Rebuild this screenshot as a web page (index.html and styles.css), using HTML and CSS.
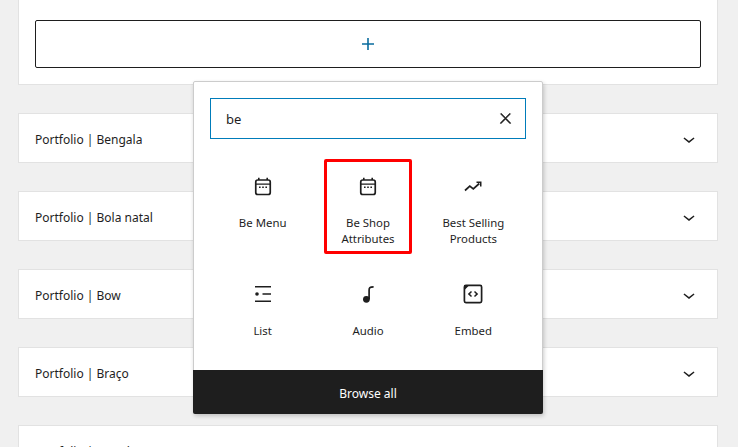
FILE: index.html
```html
<!DOCTYPE html>
<html lang="en">
<head>
  <meta charset="UTF-8" />
  <title>Block inserter</title>
  <link rel="stylesheet" href="styles.css">
</head>
<body>

<div class="editor">
  <div class="appender-card">
    <button class="appender">
      <svg class="icon-plus" viewBox="0 0 24 24" width="24" height="24"><path d="M18 11.2h-5.2V6h-1.600v5.200H6v1.600h5.200V18h1.600v-5.200H18z"/></svg>
    </button>
  </div>

  <div class="row">
    <span>Portfolio | Bengala</span>
    <svg class="chevron" viewBox="0 0 24 24" width="24" height="24"><path d="M17.500 11.600L12 16l-5.500-4.400.9-1.200L12 14l4.600-3.600z"/></svg>
  </div>
  <div class="row">
    <span>Portfolio | Bola natal</span>
    <svg class="chevron" viewBox="0 0 24 24" width="24" height="24"><path d="M17.500 11.600L12 16l-5.500-4.400.9-1.200L12 14l4.600-3.600z"/></svg>
  </div>
  <div class="row">
    <span>Portfolio | Bow</span>
    <svg class="chevron" viewBox="0 0 24 24" width="24" height="24"><path d="M17.500 11.600L12 16l-5.500-4.400.9-1.200L12 14l4.600-3.600z"/></svg>
  </div>
  <div class="row">
    <span>Portfolio | Braço</span>
    <svg class="chevron" viewBox="0 0 24 24" width="24" height="24"><path d="M17.500 11.600L12 16l-5.500-4.400.9-1.200L12 14l4.600-3.600z"/></svg>
  </div>
  <div class="row">
    <span>Portfolio | Bread</span>
    <svg class="chevron" viewBox="0 0 24 24" width="24" height="24"><path d="M17.500 11.600L12 16l-5.500-4.400.9-1.200L12 14l4.600-3.600z"/></svg>
  </div>
</div>

<!-- inserter popover -->
<div class="popover">
  <div class="popover-body">
    <div class="search">
      <span>be</span>
      <svg viewBox="0 0 24 24" width="17" height="17"><path d="M13 11.800l6.100-6.300-1-1-6.100 6.200-6.100-6.200-1 1 6.100 6.300-6.500 6.700 1 1 6.500-6.600 6.500 6.600 1-1z"/></svg>
    </div>

    <div class="blocks">
      <div class="block">
        <svg viewBox="0 0 24 24" width="24" height="24"><rect class="line" x="4.750" y="6" width="14.500" height="14.500" rx="2"/><path d="M4.500 9.400h15v1.400h-15zM7 3.800h1.600V6H7zM15.400 3.800H17V6h-1.600zM8 12.500h1.600v1.600H8zM11.200 12.500h1.600v1.600h-1.600zM14.400 12.500H16v1.600h-1.600z"/></svg>
        <span>Be Menu</span>
      </div>
      <div class="block marked">
        <svg viewBox="0 0 24 24" width="24" height="24"><rect class="line" x="4.750" y="6" width="14.500" height="14.500" rx="2"/><path d="M4.500 9.400h15v1.400h-15zM7 3.800h1.600V6H7zM15.400 3.800H17V6h-1.600zM8 12.500h1.600v1.600H8zM11.200 12.500h1.600v1.600h-1.600zM14.400 12.500H16v1.600h-1.600z"/></svg>
        <span>Be Shop Attributes</span>
      </div>
      <div class="block">
        <svg viewBox="0 0 24 24" width="24" height="24"><path class="line" d="M4 16.500l4.800-4.300 3.500 2.800 6-5.500"/><path d="M15.500 7.500h5v5H19V9h-3.500z"/></svg>
        <span>Best Selling Products</span>
      </div>
      <div class="block">
        <svg viewBox="0 0 24 24" width="24" height="24"><path d="M4 4h16v1.500H4zM4 18.500h16V20H4zM11.500 11.300H20v1.400h-8.500z"/><circle cx="6" cy="12" r="1.800"/></svg>
        <span>List</span>
      </div>
      <div class="block">
        <svg viewBox="0 0 24 24" width="24" height="24"><circle cx="10.400" cy="17.300" r="3.400"/><path class="line" d="M13.100 17V8c0-1 .2-1.700.8-2.300.8-.8 2.200-.8 3.700-.8"/></svg>
        <span>Audio</span>
      </div>
      <div class="block">
        <svg viewBox="0 0 24 24" width="24" height="24"><rect class="line" x="3.400" y="3.400" width="17.200" height="17.200" rx="1.500"/><path d="M3 3h5.500L3 8.500zM10 9l-3.200 3 3.200 3 1-1.100-2-1.900 2-1.900zM14 9l3.200 3-3.200 3-1-1.100 2-1.900-2-1.900z"/></svg>
        <span>Embed</span>
      </div>
    </div>
  </div>
  <div class="browse">Browse all</div>
</div>

</body>
</html>
```

FILE: styles.css
```css
html, body {
  height: 100%;
}

body {
  margin: 0;
  background-color: #f0f0f0;
  color: #1e1e1e;
  font-family: "Noto Sans", sans-serif;
  font-size: 12px;
  overflow: hidden;
}

.editor {
  height: 447px;
  overflow: hidden;
  padding: 0 20px 0 18px;
}

.appender-card {
  background-color: white;
  border: 1px solid #e2e2e2;
  border-top: none;
  padding: 20px 16px 16px;
  margin-bottom: 28px;
}

.appender {
  display: flex;
  justify-content: center;
  align-items: center;
  width: 100%;
  height: 48px;
  padding: 0;
  background-color: white;
  border: 1px solid #1e1e1e;
  border-radius: 2px;
}

.icon-plus {
  fill: #0a6c9e;
}

.row {
  display: flex;
  justify-content: space-between;
  align-items: center;
  box-sizing: border-box;
  height: 50px;
  margin-bottom: 28px;
  padding: 0 16px;
  background-color: white;
  border: 1px solid #e2e2e2;
}

.row span {
  padding-top: 2px;
}

.chevron {
  margin-top: 2px;
  fill: #1e1e1e;
}

.popover {
  position: absolute;
  top: 81px;
  left: 193px;
  width: 350px;
  box-sizing: border-box;
  background-color: white;
  border: 1px solid #ccc;
  border-radius: 2px;
  box-shadow: 1px 2px 4px rgba(0, 0, 0, 0.2);
}

.popover-body {
  box-sizing: border-box;
  height: 288px;
  padding: 16px;
}

.search {
  display: flex;
  justify-content: space-between;
  align-items: center;
  box-sizing: border-box;
  height: 41px;
  padding: 0 11px 0 15px;
  border: 1px solid #007cba;
  font-size: 13px;
}

.search svg {
  fill: #1e1e1e;
  stroke: #1e1e1e;
  stroke-width: 0.8;
}

.blocks {
  display: grid;
  grid-template-columns: repeat(3, 1fr);
  grid-auto-rows: 108px;
  margin-top: 35px;
}

.block {
  position: relative;
  display: flex;
  flex-direction: column;
  align-items: center;
  font-size: 11.4px;
  line-height: 16px;
  text-align: center;
}

.block svg {
  flex: none;
  margin-bottom: 17px;
  fill: #1e1e1e;
}

.block span {
  width: 80px;
}

.block .line {
  fill: none;
  stroke: #1e1e1e;
  stroke-width: 1.7;
}

/* red box drawn round the block in the screenshot */
.block.marked::after {
  content: "";
  position: absolute;
  top: -15px;
  left: 9px;
  width: 88px;
  height: 95px;
  box-sizing: border-box;
  border: 3px solid #f00;
  border-radius: 2px;
}

.browse {
  height: 44px;
  margin: 0 -1px -1px;
  background-color: #1e1e1e;
  color: white;
  font-size: 12px;
  line-height: 47px;
  text-align: center;
  border-radius: 0 0 2px 2px;
}
```
